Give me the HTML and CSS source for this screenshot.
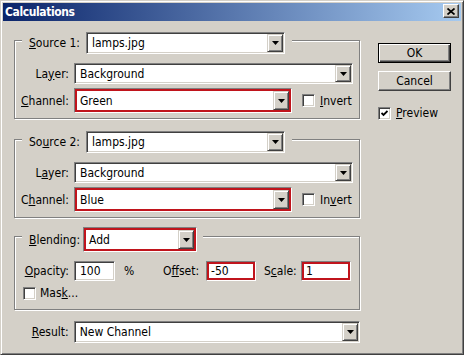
FILE: index.html
```html
<!DOCTYPE html>
<html lang="en">
<head>
  <meta charset="UTF-8" />
  <title>Calculations</title>
  <link rel="stylesheet" href="styles.css">
</head>
<body>
  <div class="window">
    <div class="titlebar">
      <span class="title">Calculations</span>
      <span class="close-btn">
        <svg width="8" height="7" viewBox="0 0 8 7"><path d="M0.5 0.5 L7.5 6.5 M7.5 0.5 L0.5 6.5" stroke="#000" stroke-width="1.7" fill="none"/></svg>
      </span>
    </div>

    <div class="content">
      <div class="main">

        <!-- Source 1 -->
        <div class="group">
          <div class="group-head">
            <span class="head-label"><u>S</u>ource 1:</span>
            <div class="combo w-source"><span class="combo-text">lamps.jpg</span><span class="drop"><svg width="7" height="4" viewBox="0 0 7 4"><polygon points="0,0 7,0 3.5,4" fill="#000"/></svg></span></div>
          </div>
          <div class="row row-layer">
            <span class="lbl">La<u>y</u>er:</span>
            <div class="combo w-layer"><span class="combo-text">Background</span><span class="drop"><svg width="7" height="4" viewBox="0 0 7 4"><polygon points="0,0 7,0 3.5,4" fill="#000"/></svg></span></div>
          </div>
          <div class="row row-channel">
            <span class="lbl"><u>C</u>hannel:</span>
            <div class="combo hl w-channel"><span class="combo-text">Green</span><span class="drop"><svg width="7" height="4" viewBox="0 0 7 4"><polygon points="0,0 7,0 3.5,4" fill="#000"/></svg></span></div>
            <span class="check invert"></span>
            <span class="check-label"><u>I</u>nvert</span>
          </div>
        </div>

        <!-- Source 2 -->
        <div class="group group-2">
          <div class="group-head">
            <span class="head-label">So<u>u</u>rce 2:</span>
            <div class="combo w-source"><span class="combo-text">lamps.jpg</span><span class="drop"><svg width="7" height="4" viewBox="0 0 7 4"><polygon points="0,0 7,0 3.5,4" fill="#000"/></svg></span></div>
          </div>
          <div class="row row-layer">
            <span class="lbl">L<u>a</u>yer:</span>
            <div class="combo w-layer"><span class="combo-text">Background</span><span class="drop"><svg width="7" height="4" viewBox="0 0 7 4"><polygon points="0,0 7,0 3.5,4" fill="#000"/></svg></span></div>
          </div>
          <div class="row row-channel">
            <span class="lbl">C<u>h</u>annel:</span>
            <div class="combo hl w-channel"><span class="combo-text">Blue</span><span class="drop"><svg width="7" height="4" viewBox="0 0 7 4"><polygon points="0,0 7,0 3.5,4" fill="#000"/></svg></span></div>
            <span class="check invert"></span>
            <span class="check-label">In<u>v</u>ert</span>
          </div>
        </div>

        <!-- Blending -->
        <div class="group group-blend">
          <div class="group-head head-blend">
            <span class="head-label"><u>B</u>lending:</span>
            <div class="combo hl w-blend"><span class="combo-text">Add</span><span class="drop"><svg width="7" height="4" viewBox="0 0 7 4"><polygon points="0,0 7,0 3.5,4" fill="#000"/></svg></span></div>
          </div>
          <div class="row row-opacity">
            <span class="lbl"><u>O</u>pacity:</span>
            <div class="field w-opacity">100</div>
            <span class="pct">%</span>
            <span class="lbl-offset">O<u>f</u>fset:</span>
            <div class="field hl w-num">-50</div>
            <span class="lbl-scale">S<u>c</u>ale:</span>
            <div class="field hl w-num">1</div>
          </div>
          <div class="row row-mask">
            <span class="check"></span>
            <span class="check-label">Mas<u>k</u>...</span>
          </div>
        </div>

        <div class="row row-result">
          <span class="lbl"><u>R</u>esult:</span>
          <div class="combo w-result"><span class="combo-text">New Channel</span><span class="drop"><svg width="7" height="4" viewBox="0 0 7 4"><polygon points="0,0 7,0 3.5,4" fill="#000"/></svg></span></div>
        </div>
      </div>

      <div class="side">
        <div class="btn btn-default">OK</div>
        <div class="btn">Cancel</div>
        <div class="row row-preview">
          <span class="check"><svg width="7" height="7" viewBox="0 0 7 7"><polyline points="0.5,3 2.5,5 6.5,1" stroke="#000" stroke-width="1.8" fill="none"/></svg></span>
          <span class="check-label"><u>P</u>review</span>
        </div>
      </div>
    </div>
  </div>
</body>
</html>
```

FILE: styles.css
```css
* {
  box-sizing: border-box;
}

body {
  margin: 0;
  font-family: 'DejaVu Sans Condensed', 'DejaVu Sans', sans-serif;
  font-size: 12px;
  color: #000;
  background: #d4d0c8;
}

u {
  text-decoration: underline;
  text-underline-offset: 1px;
}

.window {
  width: 464px;
  height: 355px;
  background: #d4d0c8;
  border: 1px solid;
  border-color: #d4d0c8 #404040 #404040 #d4d0c8;
  box-shadow: inset 1px 1px #fff, inset -1px -1px #808080;
  padding: 2px;
}

/* title bar */
.titlebar {
  height: 18px;
  display: flex;
  align-items: flex-start;
  background: linear-gradient(to right, #0a246a, #a6caf0);
  padding-left: 2px;
}

.title {
  color: #fff;
  font-weight: bold;
  line-height: 18px;
  letter-spacing: -0.4px;
}

.close-btn {
  margin: 1px 2px 0 auto;
  width: 16px;
  height: 14px;
  display: flex;
  align-items: center;
  justify-content: center;
  background: #d4d0c8;
  border: 1px solid;
  border-color: #fff #404040 #404040 #fff;
  box-shadow: inset -1px -1px #808080;
}

.content {
  display: flex;
}

.main {
  width: 346px;
  margin-left: 11px;
  padding-top: 19px;
}

/* group boxes */
.group {
  border: 1px solid #808080;
  box-shadow: inset 1px 1px #fff, 1px 1px #fff;
  padding-bottom: 5px;
}

.group-2 {
  margin-top: 20px;
}

.group-blend {
  margin-top: 18px;
  padding-bottom: 9px;
}

.group-head {
  display: flex;
  align-items: center;
  width: fit-content;
  margin: -9px 0 0 7px;
  padding: 0 7px;
  background: #d4d0c8;
}

.head-blend {
  margin-top: -10px;
  padding-right: 6px;
}

.head-label {
  width: 57px;
}

.head-blend .head-label {
  width: 54px;
}

.row {
  display: flex;
  align-items: center;
}

.lbl {
  width: 54px;
  margin-right: 5px;
  text-align: right;
}

.row-layer {
  margin-top: 9px;
}

.row-channel {
  margin-top: 4px;
}

.row-opacity {
  margin-top: 9px;
}

.row-mask {
  margin-top: 5px;
  padding-left: 8px;
}

.row-result {
  margin-top: 11px;
  padding-left: 1px;
}

/* combo boxes and fields */
.combo,
.field {
  display: flex;
  align-items: stretch;
  background: #fff;
  border: 1px solid;
  border-color: #808080 #fff #fff #808080;
  box-shadow: inset 1px 1px #404040, inset -1px -1px #d4d0c8;
  padding: 1px;
}

.combo.hl,
.field.hl {
  box-shadow: inset 0 0 0 2px #c0141c;
  padding: 2px;
}

.combo-text {
  flex: 1;
  padding-left: 4px;
  display: flex;
  align-items: center;
}

.combo.hl .combo-text {
  padding-left: 3px;
}

.drop {
  width: 16px;
  display: flex;
  align-items: center;
  justify-content: center;
  background: #d4d0c8;
  border: 1px solid;
  border-color: #d4d0c8 #404040 #404040 #d4d0c8;
  box-shadow: inset 1px 1px #fff, inset -1px -1px #808080;
}

.w-source { width: 199px; height: 22px; }
.w-layer { width: 279px; height: 21px; }
.w-channel { width: 218px; height: 25px; }
.w-blend { width: 114px; height: 25px; }
.w-result { width: 288px; height: 22px; }

.field {
  align-items: center;
  padding-left: 5px;
}

.field.hl {
  padding-left: 4px;
}

.w-opacity { width: 41px; height: 20px; }
.w-num { width: 50px; height: 20px; }

.pct {
  width: 48px;
  padding-left: 9px;
}

.lbl-offset {
  width: 43px;
}

.lbl-scale {
  width: 37px;
  margin-left: 8px;
}

/* checkboxes */
.check {
  width: 13px;
  height: 13px;
  display: flex;
  align-items: center;
  justify-content: center;
  background: #fff;
  border: 1px solid;
  border-color: #808080 #fff #fff #808080;
  box-shadow: inset 1px 1px #404040, inset -1px -1px #d4d0c8;
}

.invert {
  margin-left: 10px;
}

.check-label {
  margin-left: 5px;
}

.row-mask .check-label {
  margin-left: 4px;
}

/* buttons */
.side {
  width: 73px;
  margin-left: 18px;
  padding-top: 22px;
}

.btn {
  height: 20px;
  display: flex;
  align-items: center;
  justify-content: center;
  background: #d4d0c8;
  border: 1px solid;
  border-color: #fff #404040 #404040 #fff;
  box-shadow: inset -1px -1px #808080;
  margin-bottom: 8px;
}

.btn-default {
  border-color: #000;
  box-shadow: inset 1px 1px #fff, inset -1px -1px #404040, inset -2px -2px #808080;
}

.row-preview {
  margin-top: 15px;
}
```
